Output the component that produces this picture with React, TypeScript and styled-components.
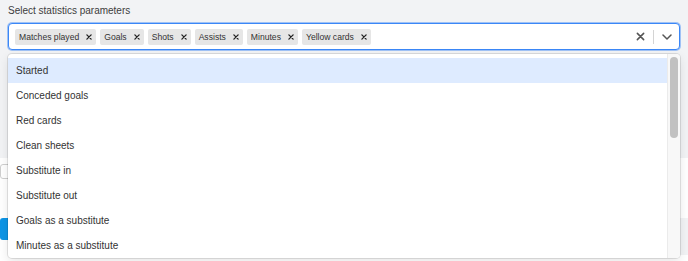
import React from 'react'
import styled, { createGlobalStyle } from 'styled-components'

const selected = ['Matches played', 'Goals', 'Shots', 'Assists', 'Minutes', 'Yellow cards']

const options = [
  'Started',
  'Conceded goals',
  'Red cards',
  'Clean sheets',
  'Substitute in',
  'Substitute out',
  'Goals as a substitute',
  'Minutes as a substitute',
]

const GlobalStyle = createGlobalStyle`
  html, body { margin: 0; padding: 0; }
  body {
    background: #f2f3f5;
    font-family: "Liberation Sans", Arial, sans-serif;
    overflow: hidden;
  }
`

const Page = styled.div`
  width: 688px;
  height: 261px;
  display: flex; flex-direction: column;
`

const TopArea = styled.section`
  padding: 4px 8px 108px;
  background: #f2f3f5;
`

const Label = styled.div`
  font-size: 10px; line-height: 14px;
  color: #3d3d3d;
  margin-bottom: 5px;
`

const SelectBox = styled.div`
  position: relative;
`

const Control = styled.div`
  display: flex; align-items: stretch;
  min-height: 25px;
  background: #fff;
  border: 1px solid #3b87f7;
  box-shadow: 0 0 0 1px rgba(59, 135, 247, 0.45);
  border-radius: 4px;
`

const ValueArea = styled.div`
  flex: 1;
  display: flex; flex-wrap: wrap; align-items: center;
  padding: 2px 4px;
`

const Chip = styled.div`
  display: flex; align-items: center;
  height: 16px;
  margin: 2px;
  background: #e6e6e6;
  border-radius: 2px;
`

const ChipLabel = styled.span`
  font-size: 8.6px; line-height: 16px;
  color: #333;
  padding: 0 3px 0 4px;
  white-space: nowrap;
`

const ChipRemove = styled.span`
  width: 14px; height: 16px;
  display: flex; align-items: center; justify-content: center;
  color: #222;
`

const Indicators = styled.div`
  display: flex; align-items: stretch;
`

const IndicatorBtn = styled.div`
  width: 25px;
  display: flex; align-items: center; justify-content: center;
  color: #555;
`

const Separator = styled.span`
  width: 1px;
  margin: 6px 0 5px;
  background: #d4d4d4;
`

const Menu = styled.div`
  position: absolute; left: 0; right: 0; top: calc(100% + 4px);
  z-index: 2;
  height: 204px;
  display: flex;
  background: #fff;
  border-radius: 4px;
  box-shadow: 0 0 0 1px rgba(0, 0, 0, 0.1), 0 4px 11px rgba(0, 0, 0, 0.1);
  overflow: hidden;
`

const MenuList = styled.div`
  flex: 1;
  padding: 4px 0;
`

const ScrollTrack = styled.div`
  width: 8px;
  padding: 3px 2px 0;
  background: #f8f8f8;
  border-left: 1px solid #ebebeb;
`

const ScrollThumb = styled.div`
  height: 81px;
  border-radius: 4px;
  background: #c1c1c1;
`

const Option = styled.div<{ $active?: boolean }>`
  height: 25px;
  padding: 0 8px;
  font-size: 10px; line-height: 25px;
  color: #333;
  background: ${(p) => (p.$active ? '#deebff' : 'transparent')};
  white-space: nowrap;
`

const Panel = styled.section`
  flex: 1;
  background: #fff;
  padding-top: 6px;
`

const TextInput = styled.div`
  width: 320px; height: 13px;
  border: 1px solid #cfcfcf;
  border-radius: 3px;
`

const FooterRow = styled.div`
  margin-top: 39px;
  display: flex; justify-content: space-between; align-items: flex-start;
`

const BlueButton = styled.button`
  width: 90px; height: 22px;
  border: none; border-radius: 3px;
  background: #0d95e6;
`

const GreyBlock = styled.div`
  width: 180px; height: 37px;
  background: #f2f3f5;
`

const Cross = ({ size, stroke }: { size: number; stroke: number }) => (
  <svg width={size} height={size} viewBox="0 0 10 10" aria-hidden>
    <path d="M1.5 1.5 L8.5 8.5 M8.5 1.5 L1.5 8.5" stroke="currentColor" strokeWidth={stroke} strokeLinecap="round" />
  </svg>
)

const Chevron = () => (
  <svg width="10" height="6" viewBox="0 0 10 6" aria-hidden>
    <path d="M1 1 L5 5 L9 1" fill="none" stroke="currentColor" strokeWidth="1.5" strokeLinecap="round" strokeLinejoin="round" />
  </svg>
)

export default function App() {
  return (
    <Page>
      <GlobalStyle />
      <TopArea>
        <Label>Select statistics parameters</Label>
        <SelectBox>
          <Control>
            <ValueArea>
              {selected.map((s) => (
                <Chip key={s}>
                  <ChipLabel>{s}</ChipLabel>
                  <ChipRemove><Cross size={6} stroke={2.2} /></ChipRemove>
                </Chip>
              ))}
            </ValueArea>
            <Indicators>
              <IndicatorBtn><Cross size={9} stroke={1.7} /></IndicatorBtn>
              <Separator />
              <IndicatorBtn><Chevron /></IndicatorBtn>
            </Indicators>
          </Control>
          <Menu>
            <MenuList>
              {options.map((o, i) => (
                <Option key={o} $active={i === 0}>{o}</Option>
              ))}
            </MenuList>
            <ScrollTrack>
              <ScrollThumb />
            </ScrollTrack>
          </Menu>
        </SelectBox>
      </TopArea>
      <Panel>
        <TextInput />
        <FooterRow>
          <BlueButton aria-label="Update" />
          <GreyBlock />
        </FooterRow>
      </Panel>
    </Page>
  )
}
